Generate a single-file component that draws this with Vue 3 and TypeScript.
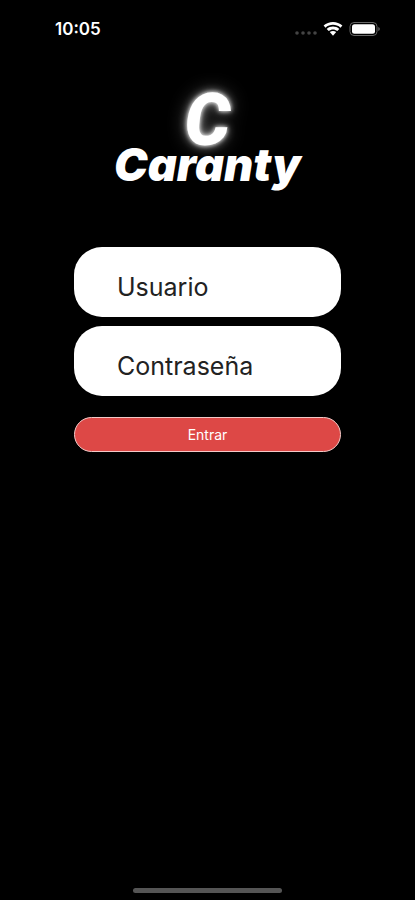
<script setup lang="ts">
import { ref } from 'vue'

const user = ref('')
const password = ref('')
</script>

<template>
  <div class="screen">
    <header class="status">
      <time class="clock">10:05</time>
      <div class="indicators">
        <svg class="dots" width="22" height="6" viewBox="0 0 22 6" aria-hidden="true">
          <circle cx="2" cy="3" r="1.8" />
          <circle cx="8" cy="3" r="1.8" />
          <circle cx="14" cy="3" r="1.8" />
          <circle cx="20" cy="3" r="1.8" />
        </svg>
        <svg width="20" height="16" viewBox="0 0 20 16" fill="#fff" aria-hidden="true">
          <path d="M.6 4.6C5.8-.2 14.2-.2 19.4 4.6L17.5 6.7C13.300 2.900 6.700 2.900 2.500 6.700Z" />
          <path d="M3.700 7.900C7.300 4.700 12.700 4.700 16.300 7.900L14.300 10C11.800 7.900 8.200 7.900 5.700 10Z" />
          <path d="M6.800 11.100C8.600 9.500 11.400 9.500 13.200 11.100L10 14.700Z" />
        </svg>
        <svg width="32" height="16" viewBox="0 0 32 16" aria-hidden="true">
          <rect x="1" y="1.500" width="27" height="13" rx="4" fill="none" stroke="#666" />
          <rect x="3" y="3.300" width="23" height="9.400" rx="2.500" fill="#fff" />
          <path d="M29.300 6v4c2-.8 2-3.200 0-4Z" fill="#666" />
        </svg>
      </div>
    </header>

    <main class="content">
      <h1 class="logo">
        <span class="mark">C</span>
        <span class="name">Caranty</span>
      </h1>
      <form class="form" @submit.prevent>
        <input v-model="user" class="field" type="text" placeholder="Usuario" aria-label="Usuario" autocomplete="username" />
        <input v-model="password" class="field" type="password" placeholder="Contraseña" aria-label="Contraseña" autocomplete="current-password" />
        <button class="submit" type="submit">Entrar</button>
      </form>
    </main>

    <div class="home"></div>
  </div>
</template>

<style>
body {
  background: #000;
}
</style>

<style scoped>
.screen {
  box-sizing: border-box;
  display: flex;
  flex-direction: column;
  min-height: 100vh;
  padding-bottom: 7px;
  background: #000;
  color: #fff;
  font-family: Inter, "Liberation Sans", sans-serif;
}

.status {
  display: flex;
  align-items: center;
  justify-content: space-between;
  height: 58px;
  padding: 0 34px 0 55px;
}

.clock {
  font-size: 17px;
  font-weight: 600;
}

.indicators {
  display: flex;
  align-items: center;
  gap: 6px;
}

.dots {
  margin-top: 8px;
  fill: #444;
}

.content {
  flex: 1;
  padding: 0 74px;
}

.logo {
  display: flex;
  flex-direction: column;
  align-items: center;
  margin: 0;
  padding-top: 24px;
  font-style: italic;
}

.mark {
  font-family: Roboto, "Open Sans", sans-serif;
  font-size: 72px;
  font-weight: 900;
  line-height: 78px;
  text-shadow: 0 0 4px #fff, 0 0 10px #aaa, 0 0 20px #555;
}

.name {
  font-size: 45px;
  font-weight: 900;
  line-height: 10px;
}

.form {
  display: flex;
  flex-direction: column;
  gap: 9px;
  margin-top: 77px;
}

.field {
  box-sizing: border-box;
  width: 100%;
  height: 70px;
  padding: 9px 43px 0;
  border: 0;
  border-radius: 28px;
  background: #fff;
  color: #111;
  font: 400 25px Inter, "Liberation Sans", sans-serif;
}

.field::placeholder {
  color: #222;
  opacity: 1;
}

.submit {
  height: 35px;
  margin-top: 12px;
  padding: 0;
  border: 1px solid #f3c9c7;
  border-radius: 18px;
  background: #dd4846;
  color: #fff;
  font: 400 14px Inter, "Liberation Sans", sans-serif;
}

.home {
  align-self: center;
  width: 36%;
  height: 5px;
  border-radius: 3px;
  background: #555;
}
</style>
